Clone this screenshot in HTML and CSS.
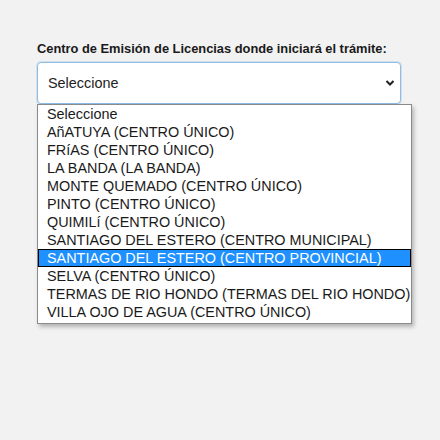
FILE: index.html
```html
<!DOCTYPE html>
<html lang="es">
<head>
<meta charset="utf-8">
<link rel="stylesheet" href="styles.css">
</head>
<body>
<div class="wrap">
  <label class="label">Centro de Emisión de Licencias donde iniciará el trámite:</label>
  <div class="field">
    <div class="select">
      <span>Seleccione</span>
      <svg class="chev" width="10" height="8" viewBox="0 0 10 8"><path d="M1.5 2 L5 5.5 L8.5 2" fill="none" stroke="#222" stroke-width="2"/></svg>
    </div>
    <ul class="list">
      <li>Seleccione</li>
      <li>AñATUYA (CENTRO ÚNICO)</li>
      <li>FRíAS (CENTRO ÚNICO)</li>
      <li>LA BANDA (LA BANDA)</li>
      <li>MONTE QUEMADO (CENTRO ÚNICO)</li>
      <li>PINTO (CENTRO ÚNICO)</li>
      <li>QUIMILí (CENTRO ÚNICO)</li>
      <li>SANTIAGO DEL ESTERO (CENTRO MUNICIPAL)</li>
      <li class="sel">SANTIAGO DEL ESTERO (CENTRO PROVINCIAL)</li>
      <li>SELVA (CENTRO ÚNICO)</li>
      <li>TERMAS DE RIO HONDO (TERMAS DEL RIO HONDO)</li>
      <li>VILLA OJO DE AGUA (CENTRO ÚNICO)</li>
    </ul>
  </div>
</div>
</body>
</html>
```
FILE: styles.css
```css
html, body { margin: 0; padding: 0; }
body {
  background: #f2f2f2;
  font-family: "Liberation Sans", Arial, sans-serif;
  color: #222;
  width: 440px;
  height: 440px;
}
.wrap { padding: 41px 0 0 37px; }
.label {
  display: block;
  font-weight: bold;
  font-size: 12.85px;
  line-height: 16px;
  color: #1a1a1a;
  margin-bottom: 5px;
}
.field { position: relative; width: 364px; }
.select {
  box-sizing: border-box;
  height: 42px;
  background: #fff;
  border: 1px solid #8fbde6;
  border-radius: 4px;
  box-shadow: 0 0 0 1px rgba(120,170,220,0.25);
  display: flex;
  align-items: center;
  justify-content: space-between;
  padding: 0 5px 0 10px;
  font-size: 14.4px;
  color: #222;
}
.chev { display: block; }
.list {
  position: absolute;
  left: 0;
  top: 42px;
  width: 375px;
  box-sizing: border-box;
  margin: 0;
  padding: 0 0 2px 0;
  list-style: none;
  background: #fff;
  border: 1px solid #8a8a8a;
  box-shadow: 2px 3px 4px rgba(0,0,0,0.25);
}
.list li {
  font-size: 14.4px;
  line-height: 18px;
  height: 18px;
  padding-left: 9px;
  white-space: nowrap;
  color: #1a1a1a;
  box-sizing: border-box;
}
.list li.sel {
  background: #1e90ff;
  color: #fff;
  border: 1px solid #000;
  line-height: 16px;
  padding-left: 8px;
}
```
